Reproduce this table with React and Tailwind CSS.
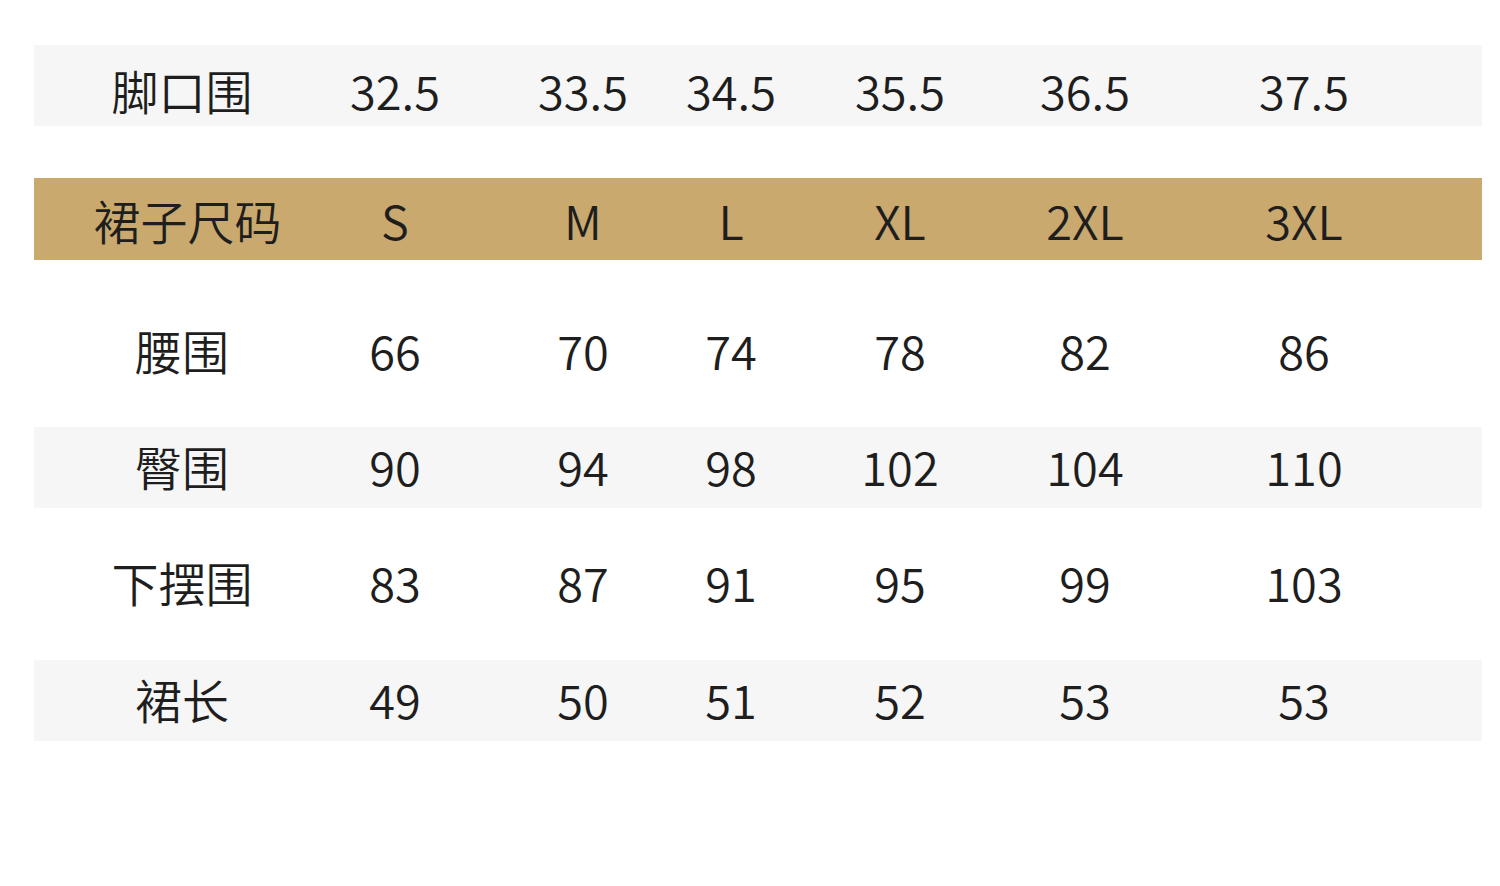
import React from "react";

const cols = "grid grid-cols-[296px_130px_246px_50px_288px_82px_356px]";

function Row({ label, values, className = "", labelClass = "" }) {
  return (
    <div className={`${cols} w-[1448px] h-[81px] items-center ${className}`}>
      <div className={`flex justify-center whitespace-nowrap ${labelClass}`}>{label}</div>
      {values.map((v, i) => (
        <div key={i} className="flex justify-center whitespace-nowrap">
          {v}
        </div>
      ))}
    </div>
  );
}

export default function App() {
  return (
    <div
      className="min-h-screen w-[1500px] bg-white pl-[34px] pt-[45px] text-[47px] font-[350] leading-none text-[#1e1e1e]"
      style={{ fontFamily: '"Noto Sans CJK SC", "Noto Sans", sans-serif' }}
    >
      <Row
        label="脚口围"
        values={["32.5", "33.5", "34.5", "35.5", "36.5", "37.5"]}
        className="bg-[#f6f6f6] pt-[7px]"
      />
      <Row
        label="裙子尺码"
        values={["S", "M", "L", "XL", "2XL", "3XL"]}
        className="mt-[52px] h-[82px] bg-[#c9a96e] pt-0"
        labelClass="pl-[11px]"
      />
      <Row
        label="腰围"
        values={["66", "70", "74", "78", "82", "86"]}
        className="mt-[52px] pb-[7px]"
      />
      <Row
        label="臀围"
        values={["90", "94", "98", "102", "104", "110"]}
        className="mt-[34px] bg-[#f6f6f6] pb-[4px]"
      />
      <Row
        label="下摆围"
        values={["83", "87", "91", "95", "99", "103"]}
        className="mt-[36px] pb-[6px]"
      />
      <Row
        label="裙长"
        values={["49", "50", "51", "52", "53", "53"]}
        className="mt-[35px] bg-[#f6f6f6] pb-[4px]"
      />
    </div>
  );
}
